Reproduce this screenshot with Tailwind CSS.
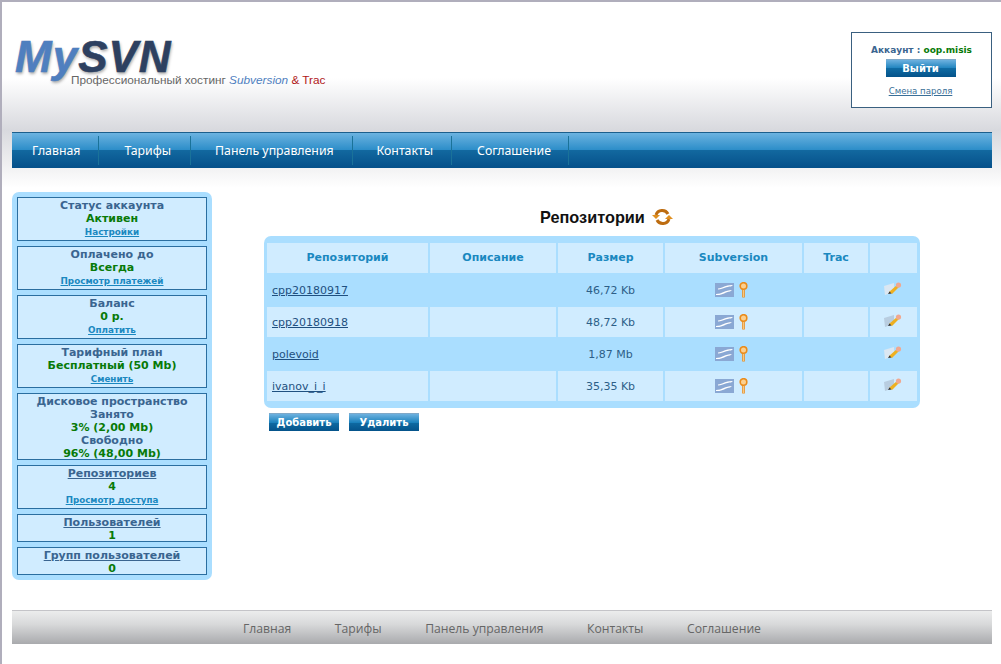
<!DOCTYPE html>
<html lang="ru">
<head>
    <meta charset="UTF-8">
    <title>MySVN</title>
    <script src="https://cdn.jsdelivr.net/npm/@tailwindcss/browser@4"></script>
</head>
<body class="h-[664px] overflow-hidden bg-white border-t-2 border-l-2 border-[#b0aebc] font-['DejaVu_Sans',sans-serif] text-[#3a6590]">

<!-- header + nav -->
<div class="h-[188px] bg-[linear-gradient(#fff_0,#fff_76px,#d8d9de_128px,#f2f2f3_166px,#fff_186px)] pl-[10px] pr-[9px]">
    <header class="h-[130px] flex justify-between items-start">
        <div class="pt-[30px] pl-[3px]">
            <div class="font-['Liberation_Sans',sans-serif] text-[44px] leading-[50px] font-bold italic tracking-[1px] [-webkit-text-stroke:0.6px] [text-shadow:1px_2px_3px_#aaa]"><span class="text-[#4f7fbf]">My</span><span class="text-[#2d4060]">SVN</span></div>
            <div class="-mt-[9px] ml-[56px] font-['Liberation_Sans',sans-serif] text-[11.8px] leading-[15px] text-[#666] whitespace-nowrap">Профессиональный хостинг <i class="text-[#4f7fbf]">Subversion</i> <span class="text-[#b01818]">&amp; Trac</span></div>
        </div>
        <div class="mt-[30px] w-[141px] h-[76px] border border-[#3a6080] bg-white flex flex-col items-center text-[9px] font-bold">
            <div class="mt-[10px] leading-[14px]">Аккаунт : <span class="text-[#087a08]">oop.misis</span></div>
            <button class="mt-[2px] -ml-[2px] w-[70px] h-[18px] border-t border-[#7fa8c8] bg-[linear-gradient(#6db1df,#1c82bd_50%,#0f6ba3_50%,#05538a)] text-white text-[10px] font-bold">Выйти</button>
            <a href="#" class="mt-[8px] -ml-[2px] text-[8.6px] font-normal underline text-[#3a6f98]">Смена пароля</a>
        </div>
    </header>
    <nav class="h-[36px] border-t border-[#1c5f8c] bg-[linear-gradient(#6cb3e0,#2a8cc8_50%,#12689f_50%,#05508a)] flex font-['Noto_Sans',sans-serif] text-[12.3px] text-white">
        <a href="#" class="pl-[20px] pr-[18px] pt-[2px] border-r border-[#1a7299] my-[3px] flex items-center">Главная</a>
        <a href="#" class="pl-[25px] pr-[19px] pt-[2px] border-r border-[#1a7299] my-[3px] flex items-center">Тарифы</a>
        <a href="#" class="pl-[24px] pr-[18px] pt-[2px] border-r border-[#1a7299] my-[3px] flex items-center">Панель управления</a>
        <a href="#" class="pl-[24px] pr-[18px] pt-[2px] border-r border-[#1a7299] my-[3px] flex items-center">Контакты</a>
        <a href="#" class="pl-[25px] pr-[17px] pt-[2px] border-r border-[#1a7299] my-[3px] flex items-center">Соглашение</a>
    </nav>
</div>

<div class="mt-[2px] ml-[10px] flex items-start">
    <!-- sidebar -->
    <aside class="w-[200px] h-[388px] bg-[#aadeff] rounded-[7px] p-[5px] flex flex-col gap-[5px] text-center text-[11px] leading-[13px] font-bold">
        <div class="h-[44px] border border-[#2a6ea0] bg-[#d0ecff] pt-[1px]">
            <div>Статус аккаунта</div><div class="text-[#087a08]">Активен</div><a href="#" class="block mt-[1px] text-[8.8px] leading-[13px] underline text-[#1a88c0]">Настройки</a>
        </div>
        <div class="h-[44px] border border-[#2a6ea0] bg-[#d0ecff] pt-[1px]">
            <div>Оплачено до</div><div class="text-[#087a08]">Всегда</div><a href="#" class="block mt-[1px] text-[8.8px] leading-[13px] underline text-[#1a88c0]">Просмотр платежей</a>
        </div>
        <div class="h-[44px] border border-[#2a6ea0] bg-[#d0ecff] pt-[1px]">
            <div>Баланс</div><div class="text-[#087a08]">0 р.</div><a href="#" class="block mt-[1px] text-[8.8px] leading-[13px] underline text-[#1a88c0]">Оплатить</a>
        </div>
        <div class="h-[44px] border border-[#2a6ea0] bg-[#d0ecff] pt-[1px]">
            <div>Тарифный план</div><div class="text-[#087a08]">Бесплатный (50 Mb)</div><a href="#" class="block mt-[1px] text-[8.8px] leading-[13px] underline text-[#1a88c0]">Сменить</a>
        </div>
        <div class="h-[67px] border border-[#2a6ea0] bg-[#d0ecff] pt-[1px]">
            <div>Дисковое пространство</div><div>Занято</div><div class="text-[#087a08]">3% (2,00 Mb)</div><div>Свободно</div><div class="text-[#087a08]">96% (48,00 Mb)</div>
        </div>
        <div class="h-[44px] border border-[#2a6ea0] bg-[#d0ecff] pt-[1px]">
            <a href="#" class="block underline">Репозиториев</a><div class="text-[#087a08]">4</div><a href="#" class="block mt-[1px] text-[8.7px] leading-[13px] underline text-[#1a88c0]">Просмотр доступа</a>
        </div>
        <div class="h-[28px] border border-[#2a6ea0] bg-[#d0ecff] pt-[1px]">
            <a href="#" class="block underline">Пользователей</a><div class="text-[#087a08]">1</div>
        </div>
        <div class="h-[28px] border border-[#2a6ea0] bg-[#d0ecff] pt-[1px]">
            <a href="#" class="block underline">Групп пользователей</a><div class="text-[#087a08]">0</div>
        </div>
    </aside>

    <!-- main -->
    <main class="ml-[52px] w-[656px]">
        <h1 class="mt-[14px] h-[22px] pl-[276px] flex items-center gap-[7px] text-[16.3px] font-bold text-[#111] font-['Liberation_Sans',sans-serif] whitespace-nowrap">Репозитории
            <svg width="21" height="18" viewBox="0 0 21 18" fill="none"><path d="M4 7A6.5 6.5 0 0 1 16 6" stroke="#bd6c10" stroke-width="3"/><path d="M17 11A6.5 6.5 0 0 1 5 12" stroke="#bd6c10" stroke-width="3"/><path d="M0 7h8l-4 4z" fill="#e09020"/><path d="M21 11h-8l4-4z" fill="#e09020"/></svg>
        </h1>
        <div class="mt-[8px] h-[172px] bg-[#aadeff] rounded-[7px] px-[1px] pt-[5px]">
            <table class="table-fixed border-separate border-spacing-[2px] w-[654px] text-[11px] text-[#2d5f88]">
                <colgroup><col class="w-[161px]"><col class="w-[126px]"><col class="w-[105px]"><col class="w-[137px]"><col class="w-[64px]"><col></colgroup>
                <thead>
                    <tr class="h-[30px] font-bold text-[#1a88c0]">
                        <th class="bg-[#d0ecff]">Репозиторий</th><th class="bg-[#d0ecff]">Описание</th><th class="bg-[#d0ecff]">Размер</th><th class="bg-[#d0ecff]">Subversion</th><th class="bg-[#d0ecff]">Trac</th><th class="bg-[#d0ecff]"></th>
                    </tr>
                </thead>
                <tbody>
                    <tr class="h-[30px]">
                        <td class="px-[5px] pt-[2px]"><a href="#" class="underline text-[#1f5080]">cpp20180917</a></td><td></td><td class="text-center pt-[2px]">46,72 Kb</td>
                        <td><div class="flex justify-center gap-[5px] -ml-[4px] -mt-[1px] items-center">
                            <svg width="19" height="14" viewBox="0 0 19 14"><rect width="19" height="14" fill="#8aa8d4"/><path d="M3 5.5C8 5 11 1.5 18 2L16 3.5C11 3.5 9 6 3 6.5zM1 11C7 11 10 7 17 7L15 8.5C10 9 8 12.5 1 12z" fill="#fff"/></svg>
                            <svg width="9" height="16" viewBox="0 0 9 16" fill="none"><circle cx="4.5" cy="4" r="3.3" stroke="#ea8c1c" stroke-width="1.6" fill="#fbd090"/><path d="M4.5 7.5v8" stroke="#ea8c1c" stroke-width="2.6"/><path d="M4.5 8v7" stroke="#fcd79a" stroke-width=".8"/></svg>
                        </div></td><td></td>
                        <td><div class="flex justify-center -ml-[3px] -mt-[3px]"><svg width="19" height="14" viewBox="0 0 19 14"><path d="M1 4l10-3v9l-9 3z" fill="#dbe7f2"/><path d="M6 10l8-7 2 2-7 7z" fill="#eeb020"/><circle cx="15.5" cy="3" r="2.6" fill="#f0a890"/><path d="M5 12l1.5-2.5 2 2z" fill="#333"/></svg></div></td>
                    </tr>
                    <tr class="h-[30px]">
                        <td class="bg-[#d0ecff] px-[5px] pt-[2px]"><a href="#" class="underline text-[#1f5080]">cpp20180918</a></td><td class="bg-[#d0ecff]"></td><td class="bg-[#d0ecff] text-center pt-[2px]">48,72 Kb</td>
                        <td class="bg-[#d0ecff]"><div class="flex justify-center gap-[5px] -ml-[4px] -mt-[1px] items-center">
                            <svg width="19" height="14" viewBox="0 0 19 14"><rect width="19" height="14" fill="#8aa8d4"/><path d="M3 5.5C8 5 11 1.5 18 2L16 3.5C11 3.5 9 6 3 6.5zM1 11C7 11 10 7 17 7L15 8.5C10 9 8 12.5 1 12z" fill="#fff"/></svg>
                            <svg width="9" height="16" viewBox="0 0 9 16" fill="none"><circle cx="4.5" cy="4" r="3.3" stroke="#ea8c1c" stroke-width="1.6" fill="#fbd090"/><path d="M4.5 7.5v8" stroke="#ea8c1c" stroke-width="2.6"/><path d="M4.5 8v7" stroke="#fcd79a" stroke-width=".8"/></svg>
                        </div></td><td class="bg-[#d0ecff]"></td>
                        <td class="bg-[#d0ecff]"><div class="flex justify-center -ml-[3px] -mt-[3px]"><svg width="19" height="14" viewBox="0 0 19 14"><path d="M1 4l10-3v9l-9 3z" fill="#b8cde0"/><path d="M6 10l8-7 2 2-7 7z" fill="#eeb020"/><circle cx="15.5" cy="3" r="2.6" fill="#f0a890"/><path d="M5 12l1.5-2.5 2 2z" fill="#333"/></svg></div></td>
                    </tr>
                    <tr class="h-[30px]">
                        <td class="px-[5px] pt-[2px]"><a href="#" class="underline text-[#1f5080]">polevoid</a></td><td></td><td class="text-center pt-[2px]">1,87 Mb</td>
                        <td><div class="flex justify-center gap-[5px] -ml-[4px] -mt-[1px] items-center">
                            <svg width="19" height="14" viewBox="0 0 19 14"><rect width="19" height="14" fill="#8aa8d4"/><path d="M3 5.5C8 5 11 1.5 18 2L16 3.5C11 3.5 9 6 3 6.5zM1 11C7 11 10 7 17 7L15 8.5C10 9 8 12.5 1 12z" fill="#fff"/></svg>
                            <svg width="9" height="16" viewBox="0 0 9 16" fill="none"><circle cx="4.5" cy="4" r="3.3" stroke="#ea8c1c" stroke-width="1.6" fill="#fbd090"/><path d="M4.5 7.5v8" stroke="#ea8c1c" stroke-width="2.6"/><path d="M4.5 8v7" stroke="#fcd79a" stroke-width=".8"/></svg>
                        </div></td><td></td>
                        <td><div class="flex justify-center -ml-[3px] -mt-[3px]"><svg width="19" height="14" viewBox="0 0 19 14"><path d="M1 4l10-3v9l-9 3z" fill="#dbe7f2"/><path d="M6 10l8-7 2 2-7 7z" fill="#eeb020"/><circle cx="15.5" cy="3" r="2.6" fill="#f0a890"/><path d="M5 12l1.5-2.5 2 2z" fill="#333"/></svg></div></td>
                    </tr>
                    <tr class="h-[30px]">
                        <td class="bg-[#d0ecff] px-[5px] pt-[2px]"><a href="#" class="underline text-[#1f5080]">ivanov_i_i</a></td><td class="bg-[#d0ecff]"></td><td class="bg-[#d0ecff] text-center pt-[2px]">35,35 Kb</td>
                        <td class="bg-[#d0ecff]"><div class="flex justify-center gap-[5px] -ml-[4px] -mt-[1px] items-center">
                            <svg width="19" height="14" viewBox="0 0 19 14"><rect width="19" height="14" fill="#8aa8d4"/><path d="M3 5.5C8 5 11 1.5 18 2L16 3.5C11 3.5 9 6 3 6.5zM1 11C7 11 10 7 17 7L15 8.5C10 9 8 12.5 1 12z" fill="#fff"/></svg>
                            <svg width="9" height="16" viewBox="0 0 9 16" fill="none"><circle cx="4.5" cy="4" r="3.3" stroke="#ea8c1c" stroke-width="1.6" fill="#fbd090"/><path d="M4.5 7.5v8" stroke="#ea8c1c" stroke-width="2.6"/><path d="M4.5 8v7" stroke="#fcd79a" stroke-width=".8"/></svg>
                        </div></td><td class="bg-[#d0ecff]"></td>
                        <td class="bg-[#d0ecff]"><div class="flex justify-center -ml-[3px] -mt-[3px]"><svg width="19" height="14" viewBox="0 0 19 14"><path d="M1 4l10-3v9l-9 3z" fill="#b8cde0"/><path d="M6 10l8-7 2 2-7 7z" fill="#eeb020"/><circle cx="15.5" cy="3" r="2.6" fill="#f0a890"/><path d="M5 12l1.5-2.5 2 2z" fill="#333"/></svg></div></td>
                    </tr>
                </tbody>
            </table>
        </div>
        <div class="mt-[5px] ml-[5px] flex gap-[10px]">
            <button class="w-[70px] h-[18px] border-t border-[#7fa8c8] bg-[linear-gradient(#6db1df,#1c82bd_50%,#0f6ba3_50%,#05538a)] text-white text-[10px] font-bold">Добавить</button>
            <button class="w-[70px] h-[18px] border-t border-[#7fa8c8] bg-[linear-gradient(#6db1df,#1c82bd_50%,#0f6ba3_50%,#05538a)] text-white text-[10px] font-bold">Удалить</button>
        </div>
    </main>
</div>

<!-- footer -->
<footer class="mt-[30px] ml-[10px] w-[980px] h-[34px] pt-[3px] border-t border-[#c4c4c8] bg-[linear-gradient(#eceded,#d8d9da_40%,#a9aaad)] flex justify-center gap-[43.5px] items-center font-['Open_Sans',sans-serif] text-[12.2px] text-[#666]">
    <a href="#">Главная</a><a href="#">Тарифы</a><a href="#">Панель управления</a><a href="#">Контакты</a><a href="#">Соглашение</a>
</footer>
</body>
</html>
